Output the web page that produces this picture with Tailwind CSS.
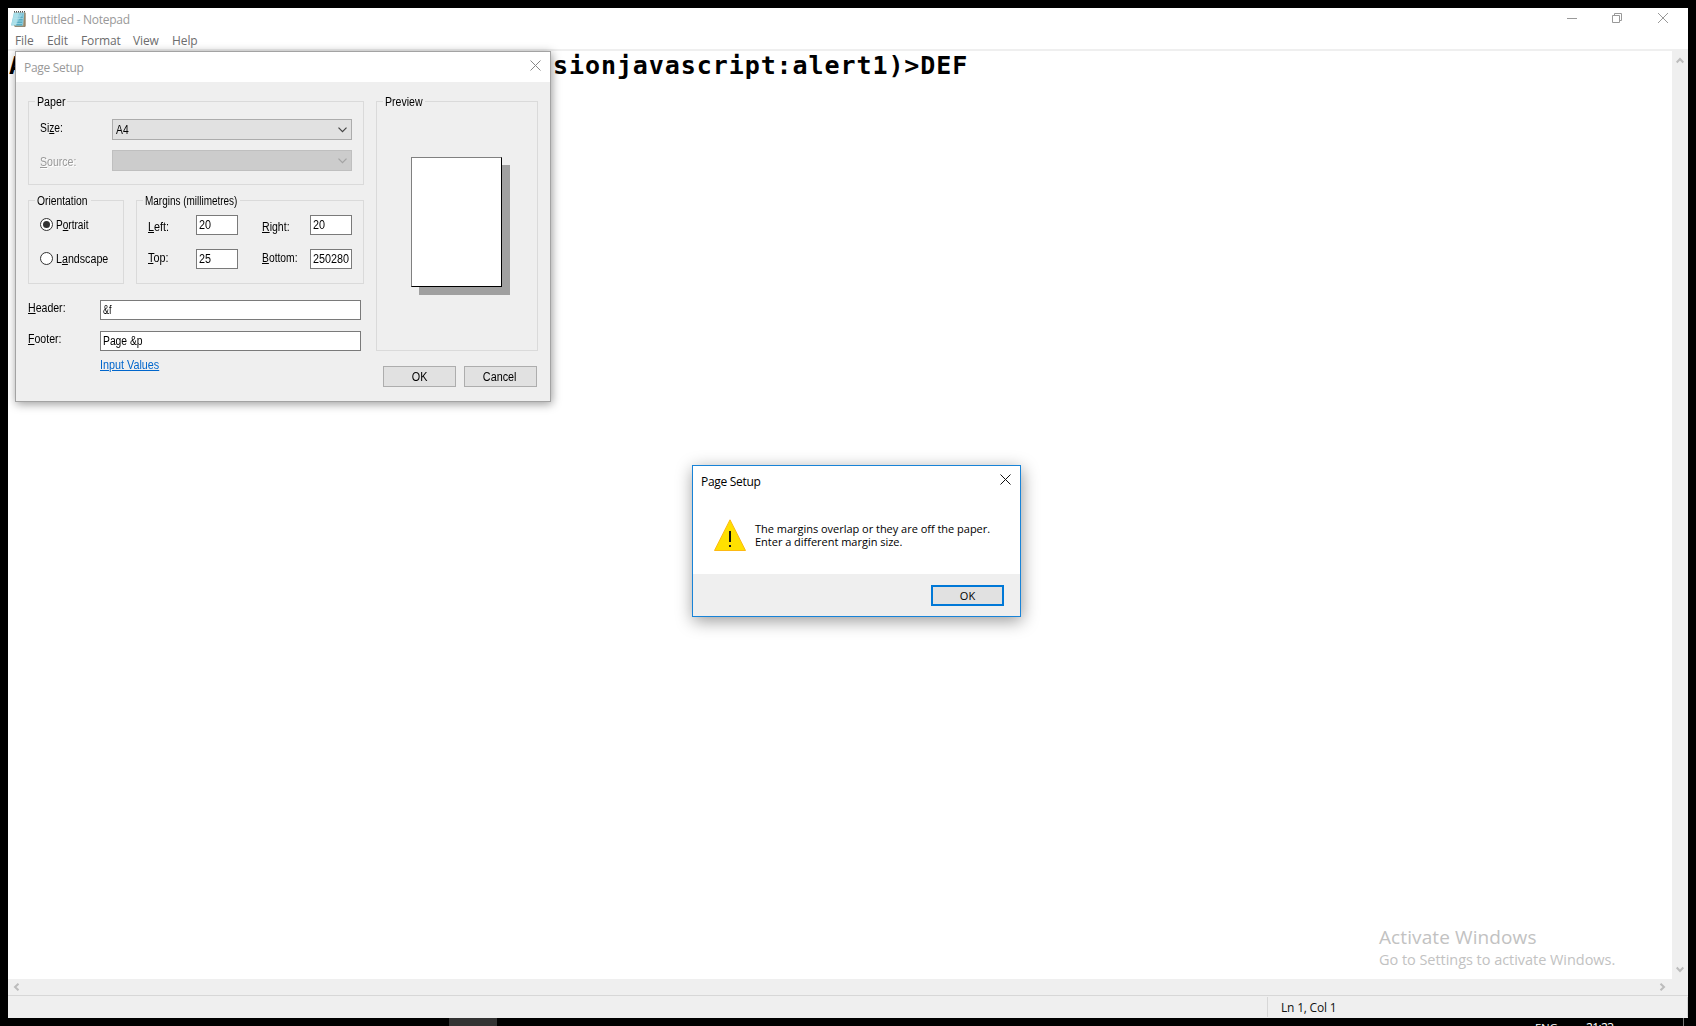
<!DOCTYPE html>
<html lang="en">
<head>
<meta charset="utf-8">
<title>Untitled - Notepad</title>
<script src="https://cdn.jsdelivr.net/npm/@tailwindcss/browser@4"></script>
</head>
<body class="relative flex h-[1026px] w-[1696px] flex-col overflow-hidden bg-black font-['Open_Sans','Noto_Sans',sans-serif] whitespace-nowrap">

<!-- Notepad window -->
<main class="mx-2 mt-2 flex h-[1010px] w-[1680px] shrink-0 flex-col bg-white">
  <header class="flex h-[41px] shrink-0 justify-between">
    <div class="flex flex-col">
      <div class="flex h-[22px] items-center pl-[3px]">
        <svg class="h-[17px] w-4 shrink-0" viewBox="0 0 16 17">
          <path d="M3 1.5H14.5V15.5H3Z" fill="#a89878"/>
          <path d="M3 1.5H13.5L12 14.5H0Z" fill="#8ccbdd"/>
          <path d="M3 2H8L5 14H.5Z" fill="#a9dfe9"/>
          <path d="M12 3L11 14.5H5L7 10Z" fill="#57adc4"/>
          <path d="M3.5 5H12M3 7.500H12M2.500 10H11.500M2 12.500H11" stroke="#b9e4ed" stroke-width=".6"/>
          <path d="M3 .8H14" stroke="#555" stroke-width="1.5" stroke-dasharray="1 1"/>
          <path d="M14 2V15.500H4" stroke="#786d58" fill="none" stroke-width=".7"/>
        </svg>
        <h1 class="pt-[2px] pl-1 text-[12px] tracking-[-0.26px] text-[#999]">Untitled - Notepad</h1>
      </div>
      <nav class="flex h-[19px] items-center pt-[2px] pl-[7px] text-[12px] tracking-[-0.1px] text-[#6d6d6d]">
        <span class="w-8">File</span><span class="w-[34px]">Edit</span><span class="w-[52px]">Format</span><span class="w-[39px]">View</span><span>Help</span>
      </nav>
    </div>
    <div class="flex h-5 items-center pr-5 text-[#999]">
      <svg class="mr-[35px] h-[10px] w-[10px]" viewBox="0 0 10 10" stroke="currentColor"><path d="M0 5.500H10"/></svg>
      <svg class="mr-[36px] h-[10px] w-[10px]" viewBox="0 0 10 10" fill="none" stroke="currentColor"><path d="M.5 2.500H7.500V9.500H.5ZM2.500 2.500V.5H9.500V7.500H7.500"/></svg>
      <svg class="h-[10px] w-[10px]" viewBox="0 0 10 10" stroke="currentColor"><path d="M0 0L10 10M10 0L0 10"/></svg>
    </div>
  </header>
  <div class="h-[2px] shrink-0 bg-[#efefef]"></div>
  <section class="flex h-[928px] shrink-0">
    <div class="flex flex-1 pl-px font-['DejaVu_Sans_Mono',monospace] text-[25px] leading-[30px] font-bold tracking-[0.92px] text-black">
      <span class="w-[544px]">A</span><span>sionjavascript:alert1)&gt;DEF</span>
    </div>
    <div class="flex w-4 flex-col items-center justify-between bg-[#efefef] py-[6px] text-[#bcbcbc]">
      <svg class="h-[7px] w-2" viewBox="0 0 8 7" fill="none" stroke="currentColor" stroke-width="2"><path d="M.7 5.500L4 2L7.300 5.500"/></svg>
      <svg class="h-[7px] w-2" viewBox="0 0 8 7" fill="none" stroke="currentColor" stroke-width="2"><path d="M.7 1.500L4 5L7.300 1.500"/></svg>
    </div>
  </section>
  <div class="flex h-4 shrink-0 items-center justify-between bg-[#efefef] pr-[22px] pb-px pl-[5px] text-[#bcbcbc]">
    <svg class="h-2 w-[7px]" viewBox="0 0 7 8" fill="none" stroke="currentColor" stroke-width="2"><path d="M5.500 .7L2 4L5.500 7.300"/></svg>
    <svg class="h-2 w-[7px]" viewBox="0 0 7 8" fill="none" stroke="currentColor" stroke-width="2"><path d="M1.500 .7L5 4L1.500 7.300"/></svg>
  </div>
  <footer class="flex h-[23px] shrink-0 border-t border-[#d7d7d7] bg-[#efefef] pt-px">
    <div class="w-[1259px]"></div>
    <div class="flex h-5 flex-1 items-center border-x border-[#d7d7d7] pl-[13px] text-[12px] tracking-[-0.2px] text-[#111]"><span class="pt-[2px]">Ln 1, Col 1</span></div>
  </footer>
</main>

<!-- Taskbar edge -->
<div class="flex h-2 shrink-0 overflow-hidden text-[12px] leading-[14px] text-white">
  <div class="ml-[449px] h-2 w-12 bg-[#333]"></div>
  <span class="mt-[3px] ml-[1038px] w-[51px] text-[11.500px] tracking-[-0.3px]">ENG</span>
  <span class="mt-[3px] w-[97px] tracking-[-0.6px]">21:23</span>
  <div class="h-2 w-px bg-[#777]"></div>
</div>

<!-- Activation watermark -->
<aside class="absolute top-[924px] left-[1379px] text-[#c2c2c2]">
  <p class="text-[19px] leading-[27px] tracking-[0.1px]">Activate Windows</p>
  <p class="text-[14.500px] leading-[18px] tracking-[-0.04px]">Go to Settings to activate Windows.</p>
</aside>

<!-- Page Setup dialog -->
<section class="absolute top-[51px] left-[15px] flex h-[351px] w-[536px] flex-col border border-[#a3a3a3] bg-[#efefef] shadow-[1px_2px_9px_rgba(0,0,0,0.4)]">
  <header class="flex h-[30px] shrink-0 justify-between bg-white pr-[9px] pl-2">
    <h2 class="pt-px text-[12px] leading-[29px] tracking-[-0.3px] text-[#999]">Page Setup</h2>
    <svg class="mt-2 h-[11px] w-[11px]" viewBox="0 0 11 11" stroke="#888"><path d="M.5 .5L10.500 10.500M10.500 .5L.5 10.500"/></svg>
  </header>
  <div class="flex pt-[19px] pl-3 font-['Liberation_Sans',sans-serif] text-[12px] leading-[14px] text-black">
    <div class="w-[348px]">
      <div class="relative h-[84px] w-[336px] border border-[#dadada]">
        <span class="absolute -top-[7px] left-[6px] h-[14px] w-8 bg-[#efefef] pl-[2px]"><span class="inline-block origin-left scale-x-[.89]">Paper</span></span>
        <div class="flex pt-[17px] pl-[11px]">
          <span class="mt-[2px] w-[72px]"><span class="inline-block origin-left scale-x-[.86]">Si<u>z</u>e:</span></span>
          <div class="flex h-[21px] w-[240px] items-center justify-between border border-[#acacac] bg-[#e1e1e1] pr-1 pl-[3px]">
            <span class="inline-block origin-left scale-x-[.86] pt-px">A4</span>
            <svg class="h-[6px] w-[9px]" viewBox="0 0 9 6" fill="none" stroke="#444" stroke-width="1.2"><path d="M.5 .7L4.500 4.700L8.500 .7"/></svg>
          </div>
        </div>
        <div class="flex pt-[10px] pl-[11px]">
          <span class="mt-[5px] w-[72px]"><span class="inline-block origin-left scale-x-[.88] text-[#9a9a9a] [text-shadow:1px_1px_0_white]"><u>S</u>ource:</span></span>
          <div class="flex h-[21px] w-[240px] items-center justify-end border border-[#bfbfbf] bg-[#cccccc] pr-1">
            <svg class="h-[6px] w-[9px]" viewBox="0 0 9 6" fill="none" stroke="#a3a3a3" stroke-width="1.2"><path d="M.5 .7L4.500 4.700L8.500 .7"/></svg>
          </div>
        </div>
      </div>
      <div class="mt-[15px] flex gap-3">
        <div class="relative h-[84px] w-24 border border-[#dadada]">
          <span class="absolute -top-[7px] left-[6px] h-[14px] w-[56px] bg-[#efefef] pl-[2px]"><span class="inline-block origin-left scale-x-[.86]">Orientation</span></span>
          <div class="flex pt-[17px] pl-[11px]">
            <svg class="h-[13px] w-[13px]" viewBox="0 0 13 13"><circle cx="6.500" cy="6.500" r="6" fill="#fff" stroke="#333"/><circle cx="6.500" cy="6.500" r="3.500" fill="#333"/></svg>
            <span class="ml-[3px] inline-block origin-left scale-x-[.84]">P<u>o</u>rtrait</span>
          </div>
          <div class="flex pt-5 pl-[11px]">
            <svg class="h-[13px] w-[13px]" viewBox="0 0 13 13"><circle cx="6.500" cy="6.500" r="6" fill="#fff" stroke="#333"/></svg>
            <span class="ml-[3px] inline-block origin-left scale-x-[.89]">L<u>a</u>ndscape</span>
          </div>
        </div>
        <div class="relative h-[84px] w-[228px] border border-[#dadada]">
          <span class="absolute -top-[7px] left-[6px] h-[14px] w-[97px] bg-[#efefef] pl-[2px]"><span class="inline-block origin-left scale-x-[.83]">Margins (millimetres)</span></span>
          <div class="flex pt-[14px] pl-[11px]">
            <span class="mt-[5px] w-12"><span class="inline-block origin-left scale-x-[.9]"><u>L</u>eft:</span></span>
            <span class="h-5 w-[42px] border border-[#7a7a7a] bg-white pt-[2px] pl-[2px]"><span class="inline-block origin-left scale-x-[.9]">20</span></span>
            <span class="mt-[5px] ml-6 w-12"><span class="inline-block origin-left scale-x-[.88]"><u>R</u>ight:</span></span>
            <span class="h-5 w-[42px] border border-[#7a7a7a] bg-white pt-[2px] pl-[2px]"><span class="inline-block origin-left scale-x-[.9]">20</span></span>
          </div>
          <div class="flex pt-[14px] pl-[11px]">
            <span class="mt-[2px] w-12"><span class="inline-block origin-left scale-x-[.9]"><u>T</u>op:</span></span>
            <span class="h-5 w-[42px] border border-[#7a7a7a] bg-white pt-[2px] pl-[2px]"><span class="inline-block origin-left scale-x-[.9]">25</span></span>
            <span class="mt-[2px] ml-6 w-12"><span class="inline-block origin-left scale-x-[.86]"><u>B</u>ottom:</span></span>
            <span class="h-5 w-[42px] border border-[#7a7a7a] bg-white pt-[2px] pl-[2px]"><span class="inline-block origin-left scale-x-[.9]">250280</span></span>
          </div>
        </div>
      </div>
      <div class="mt-4 flex">
        <span class="mt-px w-[72px]"><span class="inline-block origin-left scale-x-[.88]"><u>H</u>eader:</span></span>
        <span class="h-5 w-[261px] border border-[#7a7a7a] bg-white pt-[2px] pl-[2px]"><span class="inline-block origin-left scale-x-[.75]">&amp;f</span></span>
      </div>
      <div class="mt-[11px] flex">
        <span class="mt-px w-[72px]"><span class="inline-block origin-left scale-x-[.88]"><u>F</u>ooter:</span></span>
        <span class="h-5 w-[261px] border border-[#7a7a7a] bg-white pt-[2px] pl-[2px]"><span class="inline-block origin-left scale-x-[.86]">Page &amp;p</span></span>
      </div>
      <div class="mt-[7px] pl-[72px]"><a class="inline-block origin-left scale-x-[.9] text-[#0066cc] underline">Input Values</a></div>
    </div>
    <div class="w-[162px]">
      <div class="relative h-[250px] border border-[#dadada] pt-[55px] pl-[34px]">
        <span class="absolute -top-[7px] left-[6px] h-[14px] w-[42px] bg-[#efefef] pl-[2px]"><span class="inline-block origin-left scale-x-[.88]">Preview</span></span>
        <div class="h-[130px] w-[91px] border border-t-[#808080] border-r-black border-b-black border-l-[#808080] bg-white shadow-[8px_8px_0_#a0a0a0]"></div>
      </div>
      <div class="mt-[15px] ml-[7px] flex gap-2">
        <button class="h-[21px] w-[73px] border border-[#adadad] bg-[#e1e1e1]"><span class="inline-block scale-x-[.9]">OK</span></button>
        <button class="h-[21px] w-[73px] border border-[#adadad] bg-[#e1e1e1] pr-px"><span class="inline-block scale-x-[.9]">Cancel</span></button>
      </div>
    </div>
  </div>
</section>

<!-- Margin warning -->
<section class="absolute top-[465px] left-[692px] flex h-[152px] w-[329px] flex-col border border-[#1883d7] bg-white text-black shadow-[1px_4px_16px_rgba(0,0,0,0.4)]">
  <header class="flex h-[30px] shrink-0 justify-between pr-[9px] pl-2">
    <h2 class="pt-px text-[12px] leading-[29px] tracking-[-0.3px]">Page Setup</h2>
    <svg class="mt-2 h-[11px] w-[11px]" viewBox="0 0 11 11" stroke="#111"><path d="M.5 .5L10.500 10.500M10.500 .5L.5 10.500"/></svg>
  </header>
  <div class="flex flex-1 pl-[21px]">
    <svg class="mt-[23px] h-8 w-8" viewBox="0 0 32 32"><path d="M16 .8L31.500 31.500H.5Z" fill="#ffe000" stroke="#fdb913"/><path d="M15 12H17V23H15ZM15 26H17V28H15Z" fill="#111"/></svg>
    <p class="mt-[26px] ml-[9px] text-[11px] leading-[13px] tracking-[-0.02px]">The margins overlap or they are off the paper.<br>Enter a different margin size.</p>
  </div>
  <footer class="flex h-[42px] shrink-0 justify-end bg-[#efefef] pt-[11px] pr-4">
    <button class="h-[21px] w-[73px] border-2 border-[#0078d7] bg-[#e1e1e1] text-[11px] leading-[17px]">OK</button>
  </footer>
</section>
</body>
</html>
